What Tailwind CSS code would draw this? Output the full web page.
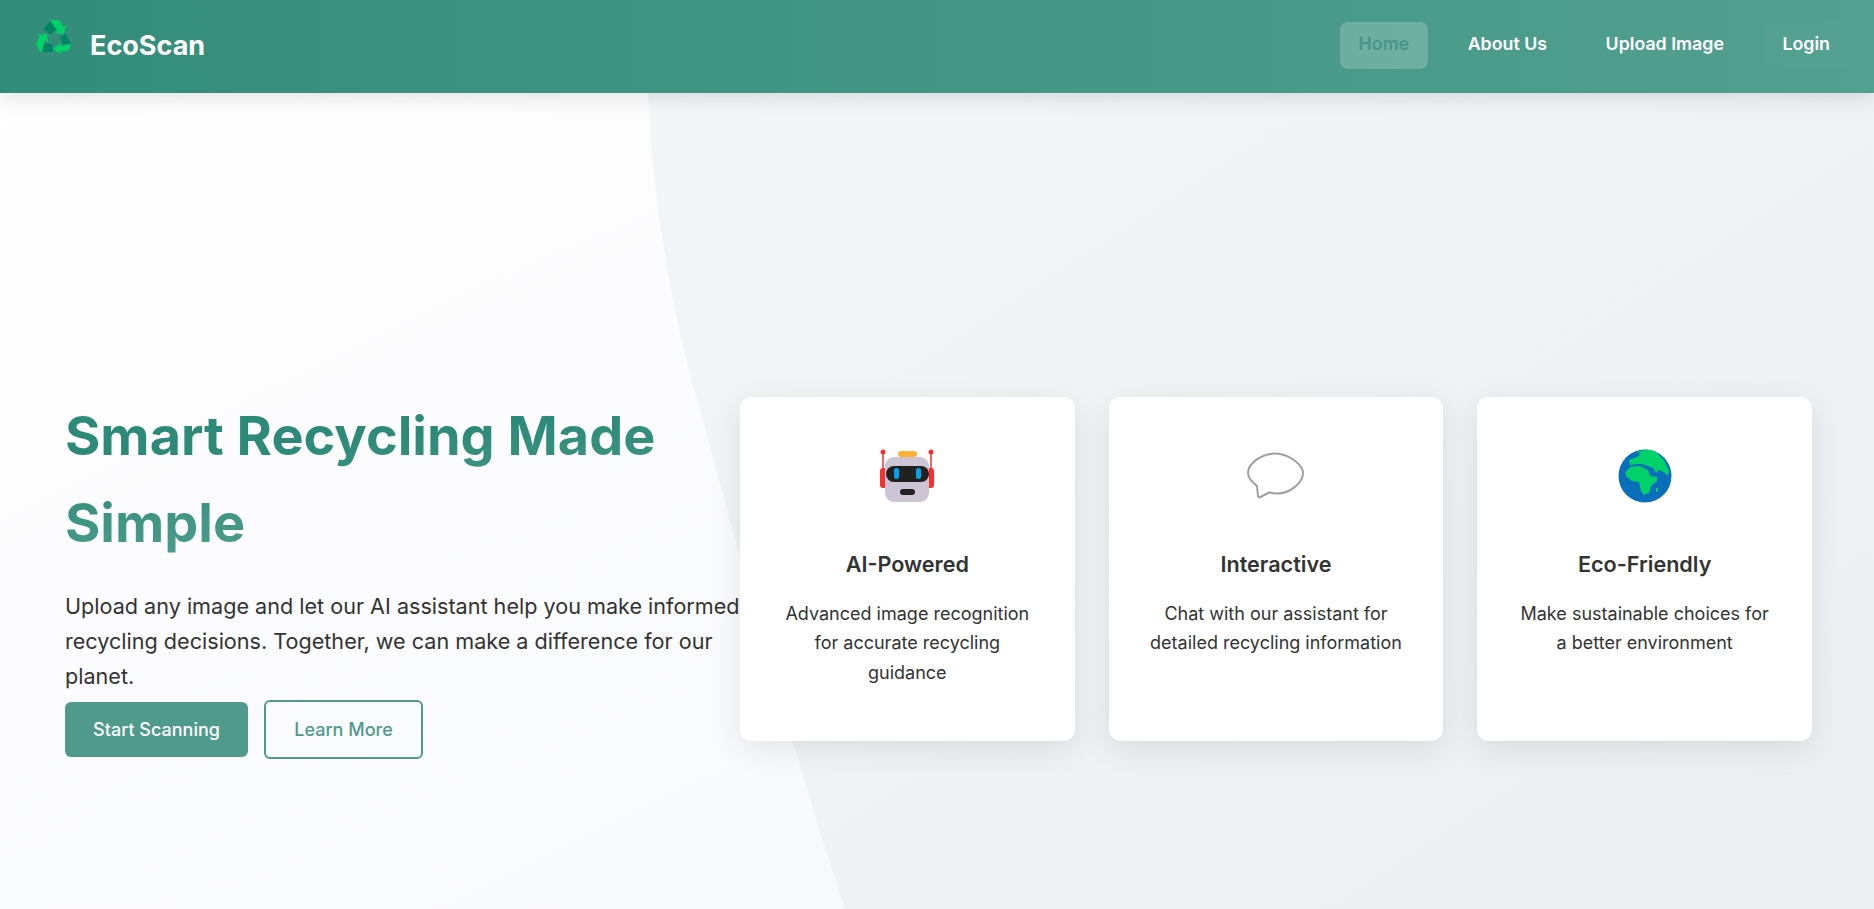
<!DOCTYPE html>
<html lang="en"><head><meta charset="utf-8"><title>EcoScan</title>
<script src="https://cdn.jsdelivr.net/npm/@tailwindcss/browser@4"></script></head>
<body class="m-0 overflow-hidden font-['Inter',sans-serif] text-[#333333]">
<div class="relative h-[909px] w-[1874px] overflow-hidden bg-gradient-to-br from-[#ffffff] to-[#f6f7fb]">
  <svg class="absolute left-0 top-0" width="1874" height="909" viewBox="0 0 1874 909"><defs><linearGradient id="bgr" x1="0" y1="0" x2="1" y2="1"><stop offset="0" stop-color="#f2f6f6"/><stop offset="1" stop-color="#ebeff2"/></linearGradient></defs><path d="M648 93C652 190 668 300 700 410C735 540 795 760 845 909H1874V93Z" fill="url(#bgr)"/></svg>
  <header class="relative z-10 flex h-[93px] items-center justify-between bg-gradient-to-r from-[#338c7a] to-[#52a08f] pl-[36px] pr-[26px] shadow-[0_4px_20px_rgba(0,0,0,0.12)]">
    <div class="flex items-center gap-[18px]">
      <svg class="mt-[-18px]" width="36" height="35" viewBox="0 0 36 35">
        <path d="M7.300 9.300 14 1 20.700 9.300 14 14.300Z" fill="#008463"/>
        <path d="M14 0H23.300L27.300 7 30 5 28 14.300 19 12.700 21.300 10.300Z" fill="#00d26a"/>
        <path d="M24 17.700 29 13.700 35 23.300 27.300 24.300Z" fill="#008463"/>
        <path d="M35 24.300 32.300 31H24.700V34.300L16.700 28.700 24.700 22.700V26Z" fill="#00d26a"/>
        <path d="M7.300 23.700H15.700L16.700 28.700V32H6.700Z" fill="#008463"/>
        <path d="M0 24.300 3.300 17 .7 15.300 10.700 13.700 12.300 22 9 20.300 5.700 32H4Z" fill="#00d26a"/>
      </svg>
      <span class="mt-[-3px] text-[27px] font-bold leading-none text-white">EcoScan</span>
    </div>
    <nav class="flex items-center gap-[22.500px] text-[17.800px] font-semibold leading-none text-white">
      <a class="mr-[-1px] mt-[-2px] flex h-[47px] items-center rounded-[8px] bg-white/20 px-[19px] pb-[4px] text-[#459887]">Home</a>
      <a class="mt-[-2px] flex h-[47px] items-center px-[18px] pb-[4px]">About Us</a>
      <a class="mt-[-2px] flex h-[47px] items-center px-[18px] pb-[4px]">Upload Image</a>
      <a class="mt-[-2px] flex h-[47px] items-center rounded-[8px] bg-white/[0.02] px-[18px] pb-[4px]">Login</a>
    </nav>
  </header>
  <main class="relative flex h-[816px] items-center pl-[65px] pr-[62px] pt-[136px]">
    <section class="w-[675px] shrink-0 pt-[14px]">
      <h1 class="bg-[linear-gradient(175deg,#2d8a78_30%,#4f9e8d_80%)] bg-clip-text text-[54px] font-bold leading-[86.400px] text-transparent">Smart Recycling Made Simple</h1>
      <p class="mt-[23px] text-[21.600px] leading-[35px]">Upload any image and let our AI assistant help you make informed recycling decisions. Together, we can make a difference for our planet.</p>
      <div class="mt-[6px] flex items-center gap-[16px] text-[18px] font-medium leading-none">
        <a class="flex h-[55px] w-[183px] items-center justify-center rounded-[6px] bg-[#4f9a8c] pt-[1px] text-white">Start Scanning</a>
        <a class="flex h-[59px] w-[159px] items-center justify-center rounded-[6px] border-2 border-[#4f9a8c] pt-[1px] text-[#4f9a8c]">Learn More</a>
      </div>
    </section>
    <section class="grid flex-1 grid-cols-3 gap-[34px]">
      <article class="flex h-[344px] flex-col items-center rounded-[12px] bg-white px-[40px] pt-[52px] text-center shadow-[0_8px_32px_rgba(0,0,0,0.09)]">
        <svg width="54" height="54" viewBox="0 0 54 54">
          <path d="M3 3V20M51 3V20" stroke="#f8312f" stroke-width="1.500"/><circle cx="3" cy="3" r="2.500" fill="#f8312f"/><circle cx="51" cy="3" r="2.500" fill="#f8312f"/>
          <rect x="18" y="2" width="19" height="6" rx="3" fill="#ffb02e"/>
          <rect x="0" y="19" width="10" height="20" rx="3" fill="#f8312f"/><rect x="44" y="19" width="10" height="20" rx="3" fill="#f8312f"/>
          <rect x="5" y="8" width="44" height="45" rx="9" fill="#cdc4d6"/>
          <rect x="6" y="17" width="43" height="16" rx="8" fill="#212121"/>
          <rect x="14" y="19" width="5" height="11" rx="2.500" fill="#00a6ed"/><rect x="36" y="19" width="5" height="11" rx="2.500" fill="#00a6ed"/>
          <rect x="20" y="40" width="15" height="6" rx="3" fill="#212121"/>
        </svg>
        <h3 class="mt-[45px] text-[21.600px] font-semibold leading-[32px]">AI-Powered</h3>
        <p class="mt-[19px] text-[18px] leading-[29.300px]">Advanced image recognition for accurate recycling guidance</p>
      </article>
      <article class="flex h-[344px] flex-col items-center rounded-[12px] bg-white px-[40px] pt-[52px] text-center shadow-[0_8px_32px_rgba(0,0,0,0.09)]">
        <svg width="57" height="54" viewBox="0 0 57 54" fill="none"><path d="M28 4.500C42 4.500 56 16 56 24C56 33 44 44.500 30 44.500C27 44.500 24.500 44 22 43.500L13.500 48C12 48.800 11 48 11 47L10 37C5 33 1 28 1 24C1 15 14 4.500 28 4.500Z" stroke="#a0a0a0" stroke-width="2" stroke-linejoin="round"/></svg>
        <h3 class="mt-[45px] text-[21.600px] font-semibold leading-[32px]">Interactive</h3>
        <p class="mt-[19px] text-[18px] leading-[29.300px]">Chat with our assistant for detailed recycling information</p>
      </article>
      <article class="flex h-[344px] flex-col items-center rounded-[12px] bg-white px-[40px] pt-[52px] text-center shadow-[0_8px_32px_rgba(0,0,0,0.09)]">
        <svg width="54" height="54" viewBox="0 0 54 54">
          <circle cx="27" cy="27" r="26.500" fill="#0a6fba"/>
          <path d="M18 3 29 .5 37 2 46 11 51 22 50 27 46 23 41 21 38 24 35 19 30 17 24 15 19 15 12 16 11 11 21 7 22 4Z" fill="#00d26a"/>
          <path d="M7 24 12 18 22 17 30 21 32 27 39 28 39 32 33 37 31 44 26 46 23 42 21 33 14 32 9 28Z" fill="#00d26a"/>
          <path d="M38 39 40 39 39.500 43 38 43Z" fill="#00d26a"/>
        </svg>
        <h3 class="mt-[45px] text-[21.600px] font-semibold leading-[32px]">Eco-Friendly</h3>
        <p class="mt-[19px] text-[18px] leading-[29.300px]">Make sustainable choices for a better environment</p>
      </article>
    </section>
  </main>
</div>
</body></html>
